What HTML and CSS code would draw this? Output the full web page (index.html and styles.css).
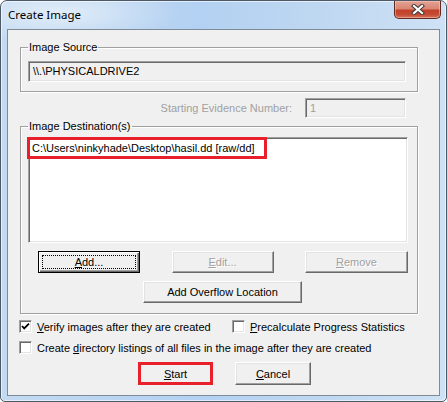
FILE: index.html
```html
<!DOCTYPE html>
<html>
<head>
<meta charset="utf-8">
<link rel="stylesheet" href="styles.css">
</head>
<body>
<div class="window">
  <div class="titlebar">
    <span class="title">Create Image</span>
    <div class="close">
      <svg width="14" height="11" viewBox="0 0 14 11">
        <path d="M3 2 L11 9 M11 2 L3 9" stroke="#3f3a3a" stroke-width="4.2" stroke-linecap="square" fill="none"/>
        <path d="M3 2 L11 9 M11 2 L3 9" stroke="#ffffff" stroke-width="2.2" stroke-linecap="square" fill="none"/>
      </svg>
    </div>
  </div>
  <div class="client">
    <fieldset class="group group-source">
      <legend>Image Source</legend>
      <div class="field readonly">\\.\PHYSICALDRIVE2</div>
    </fieldset>
    <div class="evidence-row">
      <span class="disabled-text">Starting Evidence Number:</span>
      <div class="field small disabled-text">1</div>
    </div>
    <fieldset class="group group-dest">
      <legend>Image Destination(s)</legend>
      <div class="listbox">
        <span class="list-item">C:\Users\ninkyhade\Desktop\hasil.dd [raw/dd]</span>
      </div>
      <div class="btn-row">
        <div class="btn default"><span class="focus"><u>A</u>dd...</span></div>
        <div class="btn disabled"><u>E</u>dit...</div>
        <div class="btn disabled wider"><u>R</u>emove</div>
      </div>
      <div class="overflow-row">
        <div class="btn overflow">Add Overflow Location</div>
      </div>
    </fieldset>
    <div class="check-row first">
      <div class="check">
        <span class="box">
          <svg width="9" height="9" viewBox="0 0 9 9"><path d="M1 4 L3.2 6.4 L8 1.6" stroke="#000" stroke-width="1.8" fill="none"/></svg>
        </span>
        <span><u>V</u>erify images after they are created</span>
      </div>
      <div class="check second">
        <span class="box"></span>
        <span><u>P</u>recalculate Progress Statistics</span>
      </div>
    </div>
    <div class="check-row">
      <div class="check">
        <span class="box"></span>
        <span>Create <u>d</u>irectory listings of all files in the image after they are created</span>
      </div>
    </div>
    <div class="actions">
      <div class="btn start"><u>S</u>tart</div>
      <div class="btn cancel"><u>C</u>ancel</div>
    </div>
  </div>
</div>
</body>
</html>
```

FILE: styles.css
```css
* { box-sizing: border-box; }

html, body {
  margin: 0;
  padding: 0;
  width: 447px;
  height: 402px;
  overflow: hidden;
  background: #ffffff;
}

body {
  font-family: "Liberation Sans", Arial, sans-serif;
  font-size: 11px;
  color: #000;
}

.window {
  width: 447px;
  height: 402px;
  border: 1px solid #4d5966;
  border-radius: 7px 7px 5px 5px;
  background:
    radial-gradient(ellipse 120px 30px at 60px 12px, rgba(255,255,255,0.55), rgba(255,255,255,0) 100%),
    linear-gradient(to right, #c3daf1 0%, #b3d1f2 45%, #c0d8f1 75%, #cfe2f5 100%);
  display: flex;
  flex-direction: column;
  box-shadow: inset 1px 1px 0 rgba(255,255,255,0.6), inset -1px -1px 0 rgba(255,255,255,0.6);
}

.titlebar {
  height: 28px;
  flex: none;
  display: flex;
  justify-content: space-between;
  align-items: flex-start;
  padding-left: 7px;
}

.title {
  font-family: "Noto Sans", "Open Sans", sans-serif;
  font-size: 11.5px;
  line-height: 16px;
  margin-top: 6px;
  color: #000;
}

.close {
  width: 47px;
  height: 18px;
  margin-right: 5px;
  border: 1px solid #5e2a22;
  border-top: none;
  border-radius: 0 0 5px 5px;
  background: linear-gradient(#e2a395 0%, #d98672 45%, #c2402a 55%, #c44c33 80%, #d9735a 100%);
  display: flex;
  align-items: center;
  justify-content: center;
  box-shadow: inset 0 0 0 1px rgba(255,215,205,0.45);
}

.client {
  flex: 1;
  margin: 0 6px 5px 6px;
  border: 1px solid #7d8b99;
  background: #f0f0f0;
  display: flex;
  flex-direction: column;
}

.group {
  border: 1px solid #a0a0a0;
  box-shadow: 1px 1px 0 #ffffff, inset 1px 1px 0 #ffffff;
  min-width: 0;
  margin: 11px 21px 0 12px;
}

.group legend {
  font-size: 11px;
  line-height: 13px;
  padding: 0 1px;
  margin-left: 0;
}

.group-source {
  padding: 7px 11px 9px 7px;
}

.field {
  height: 21px;
  border: 1px solid;
  border-color: #a0a0a0 #ffffff #ffffff #a0a0a0;
  box-shadow: inset 1px 1px 0 #696969, inset -1px -1px 0 #e3e3e3;
  background: #f0f0f0;
  line-height: 19px;
  padding-left: 4px;
  white-space: nowrap;
}

.evidence-row {
  display: flex;
  justify-content: flex-end;
  align-items: center;
  margin: 6px 33px 0 0;
}

.disabled-text {
  color: #a0a0a0;
}

.evidence-row > span {
  margin-right: 13px;
}

.field.small {
  width: 101px;
  height: 20px;
  line-height: 18px;
}

.group-dest {
  margin-top: 2px;
  padding: 4px 9px 10px 7px;
}

.listbox {
  height: 106px;
  background: #ffffff;
  border: 1px solid;
  border-color: #a0a0a0 #ffffff #ffffff #a0a0a0;
  box-shadow: inset 1px 1px 0 #696969, inset -1px -1px 0 #e3e3e3;
  display: flex;
  align-items: flex-start;
}

.list-item {
  margin: -1px 0 0 -2px;
  border: 3px solid #e8202c;
  height: 22px;
  width: 240px;
  line-height: 16px;
  padding-left: 2px;
  white-space: nowrap;
}

.btn {
  height: 22px;
  border: 1px solid;
  border-color: #ffffff #696969 #696969 #ffffff;
  box-shadow: inset -1px -1px 0 #a0a0a0, inset 1px 1px 0 #e3e3e3;
  background: #f0f0f0;
  display: flex;
  align-items: center;
  justify-content: center;
  white-space: nowrap;
}

.btn-row {
  margin-top: 8px;
  padding-left: 10px;
  display: flex;
  justify-content: space-between;
}

.btn-row .btn {
  width: 102px;
}

.btn-row .btn.wider {
  width: 103px;
}

.btn.default {
  border: 1px solid #000;
  box-shadow: inset 1px 1px 0 #ffffff, inset -1px -1px 0 #696969, inset -2px -2px 0 #a0a0a0;
  padding: 3px;
}

.focus {
  flex: 1;
  align-self: stretch;
  border: 1px dotted #000;
  display: flex;
  align-items: center;
  justify-content: center;
}

.btn.disabled {
  color: #a0a0a0;
  text-shadow: 1px 1px 0 #ffffff;
}

.overflow-row {
  margin-top: 8px;
  display: flex;
}

.btn.overflow {
  margin-left: 115px;
  width: 159px;
}

.check-row {
  display: flex;
  height: 13px;
  margin-top: 8px;
  margin-left: 11px;
}

.check-row.first {
  margin-top: 6px;
}

.check {
  display: flex;
  align-items: center;
  white-space: nowrap;
}

.check.second {
  margin-left: 22px;
}

.check-row.first .check:first-child {
  width: 191px;
}

.box {
  width: 13px;
  height: 13px;
  flex: none;
  margin-right: 5px;
  border: 1px solid;
  border-color: #a0a0a0 #ffffff #ffffff #a0a0a0;
  box-shadow: inset 1px 1px 0 #696969, inset -1px -1px 0 #e3e3e3;
  background: #ffffff;
  display: flex;
  align-items: center;
  justify-content: center;
}

.actions {
  display: flex;
  margin: 8px 0 0 130px;
  gap: 22px;
}

.btn.start {
  width: 75px;
  height: 23px;
  border: 3px solid #e8202c;
  box-shadow: none;
}

.btn.cancel {
  width: 76px;
  height: 23px;
}
```
